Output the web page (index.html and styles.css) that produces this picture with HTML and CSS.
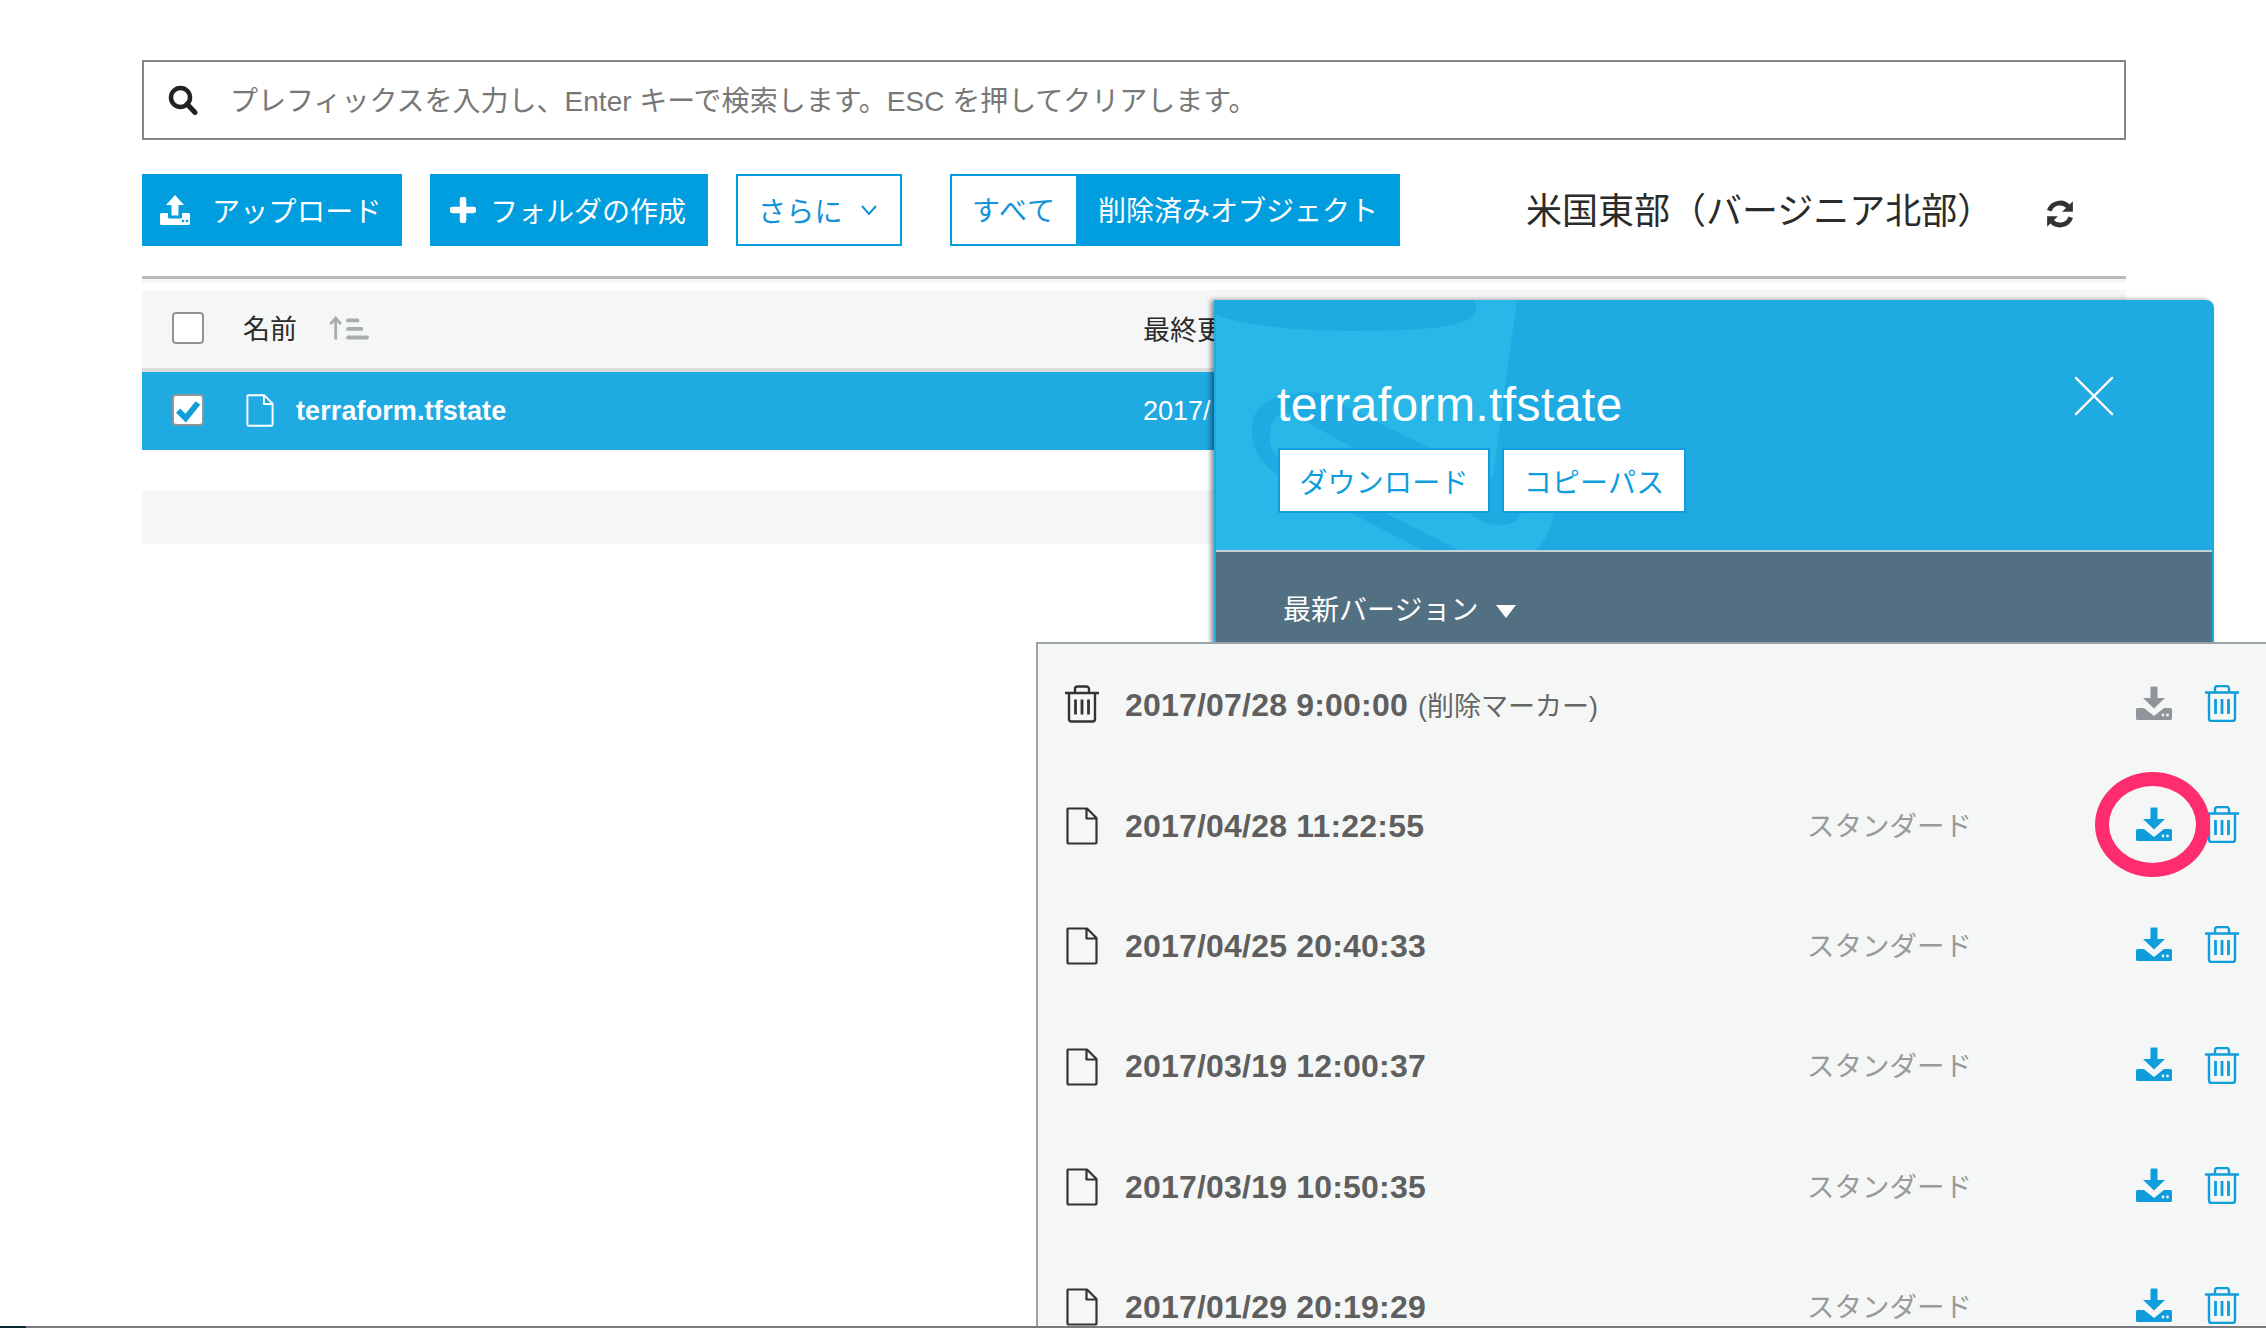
FILE: index.html
```html
<!DOCTYPE html>
<html lang="ja">
<head>
  <meta charset="UTF-8" />
  <title>terraform.tfstate</title>
  <link rel="stylesheet" href="styles.css">
</head>
<body>

<svg class="sprites" width="0" height="0">
  <symbol id="i-file" viewBox="0 0 32 38">
    <path d="M2 1.500H21L30.500 11V35a1.500 1.500 0 0 1-1.500 1.500H3A1.500 1.500 0 0 1 1.500 35V2zM20.500 2V11.500H30" fill="none" stroke="currentColor" stroke-width="2.200" stroke-linejoin="round"/>
  </symbol>
  <symbol id="i-trash" viewBox="0 0 34 37">
    <path d="M0 7.500H34M10 7V3.500A2.500 2.500 0 0 1 12.500 1H21.500A2.500 2.500 0 0 1 24 3.500V7M4 7.500V33.500A2.500 2.500 0 0 0 6.500 36H27.500A2.500 2.500 0 0 0 30 33.500V7.500" fill="none" stroke="currentColor" stroke-width="2.400"/>
    <path d="M10.500 14V29M17 14V29M23.500 14V29" fill="none" stroke="currentColor" stroke-width="2.800"/>
  </symbol>
  <symbol id="i-download" viewBox="0 0 36 34">
    <path d="M14.500 1.500a1 1 0 0 1 1-1H20.500a1 1 0 0 1 1 1V12H29L18 22.500 7 12H14.500Z" fill="currentColor"/>
    <path d="M1.500 22H8L18 30 28 22H34.500a1.500 1.500 0 0 1 1.500 1.500V32.500a1.500 1.500 0 0 1-1.500 1.500H1.500A1.500 1.500 0 0 1 0 32.500V23.500A1.500 1.500 0 0 1 1.500 22Z" fill="currentColor"/>
    <circle cx="27" cy="29" r="1.400" fill="#f5f7f7"/><circle cx="31.500" cy="29" r="1.400" fill="#f5f7f7"/>
  </symbol>
</svg>

<main class="page">
  <div class="search">
    <svg class="search-icon" viewBox="0 0 30 30"><circle cx="12.500" cy="12.500" r="9.500" fill="none" stroke="currentColor" stroke-width="4.500"/><path d="M19 19L27 27.500" stroke="currentColor" stroke-width="5" stroke-linecap="round"/></svg>
    <span>プレフィックスを入力し、Enter キーで検索します。ESC を押してクリアします。</span>
  </div>

  <div class="toolbar">
    <button class="btn btn-solid btn-upload">
      <svg class="icon-upload" viewBox="0 0 30 30"><path d="M15 0L24 10H18.500V20.500H11.500V10H6Z" fill="#fff"/><path d="M1.500 18H8V22a1.500 1.500 0 0 0 1.500 1.500H20.500A1.500 1.500 0 0 0 22 22V18H28.500A1.500 1.500 0 0 1 30 19.500V28.500A1.500 1.500 0 0 1 28.500 30H1.500A1.500 1.500 0 0 1 0 28.500V19.500A1.500 1.500 0 0 1 1.500 18Z" fill="#fff"/><circle cx="23" cy="26" r="1.300" fill="#009ddf"/><circle cx="27" cy="26" r="1.300" fill="#009ddf"/></svg>
      アップロード
    </button>
    <button class="btn btn-solid btn-folder">
      <svg class="icon-plus" viewBox="0 0 24 24"><path d="M12 2.500V21.500M2.500 12H21.500" stroke="#fff" stroke-width="6" stroke-linecap="round"/></svg>
      フォルダの作成
    </button>
    <button class="btn btn-outline btn-more">
      さらに
      <svg class="icon-chevron" viewBox="0 0 18 12"><path d="M2 2L9 10L16 2" fill="none" stroke="currentColor" stroke-width="2"/></svg>
    </button>
    <div class="segment">
      <span class="segment-off">すべて</span>
      <span class="segment-on">削除済みオブジェクト</span>
    </div>
    <span class="region">米国東部（バージニア北部）</span>
    <svg class="icon-refresh" viewBox="0 0 28 28">
      <path d="M4 11A10.500 10.500 0 0 1 22 7.500" fill="none" stroke="currentColor" stroke-width="4.500"/>
      <path d="M24 17A10.500 10.500 0 0 1 6 20.500" fill="none" stroke="currentColor" stroke-width="4.500"/>
      <path d="M26 2V12H16ZM2 26V16H12Z" fill="currentColor"/>
    </svg>
  </div>

  <div class="table">
    <div class="table-rule"></div>
    <div class="table-head">
      <span class="check"></span>
      <span class="col-name">名前</span>
      <svg class="icon-sort" viewBox="0 0 42 26"><path d="M7 25V3M1.500 9L7 2.500 12.500 9" fill="none" stroke="#a9adaf" stroke-width="3"/><path d="M20 5H30M20 14H34M20 23H40" stroke="#a9adaf" stroke-width="4" stroke-linecap="round"/></svg>
      <span class="col-date">最終更</span>
    </div>
    <div class="table-row">
      <span class="check check-on">
        <svg viewBox="0 0 24 24"><path d="M3.500 12.500L10 19 20.500 6" fill="none" stroke="#0f9ddc" stroke-width="5"/></svg>
      </span>
      <svg class="row-file"><use href="#i-file"/></svg>
      <span class="row-name">terraform.tfstate</span>
      <span class="col-date">2017/</span>
    </div>
    <div class="table-foot"></div>
  </div>
</main>

<aside class="panel">
  <div class="panel-head">
    <svg class="panel-art" viewBox="0 0 484 250">
      <path d="M0 0H301L272 213H337C336 228 330 240 320 250H0Z" fill="#29b7e8"/>
      <path d="M0 15C50 32 130 32 190 30C260 26 262 15 259 3V0H0Z" fill="#1faae2"/>
      <path d="M61 97C40 103 33 120 37 140C40 158 52 170 70 180L207 250H243L72 165C58 157 52 145 54 133C55 118 62 112 75 113L253 213C265 222 275 226 285 225C296 225 304 220 305 213L300 190L100 92C85 92 72 94 61 97Z" fill="#1faae2"/>
    </svg>
    <h1 class="panel-title">terraform.tfstate</h1>
    <svg class="panel-close" viewBox="0 0 42 42"><path d="M2 2L40 40M40 2L2 40" stroke="#fff" stroke-width="2.400" stroke-linecap="round"/></svg>
    <div class="panel-actions">
      <button class="panel-btn panel-btn-dl">ダウンロード</button>
      <button class="panel-btn panel-btn-copy">コピーパス</button>
    </div>
  </div>
  <div class="panel-version">
    <span>最新バージョン</span>
    <span class="caret"></span>
  </div>
</aside>

<section class="versions">
  <div class="version">
    <svg class="version-icon version-trash"><use href="#i-trash"/></svg>
    <span class="version-date">2017/07/28 9:00:00</span>
    <span class="version-note">(削除マーカー)</span>
    <svg class="dl dl-off"><use href="#i-download"/></svg>
    <svg class="rm"><use href="#i-trash"/></svg>
  </div>
  <div class="version">
    <svg class="version-icon"><use href="#i-file"/></svg>
    <span class="version-date">2017/04/28 11:22:55</span>
    <span class="version-class">スタンダード</span>
    <svg class="dl"><use href="#i-download"/></svg>
    <svg class="rm"><use href="#i-trash"/></svg>
    <span class="marker"></span>
  </div>
  <div class="version">
    <svg class="version-icon"><use href="#i-file"/></svg>
    <span class="version-date">2017/04/25 20:40:33</span>
    <span class="version-class">スタンダード</span>
    <svg class="dl"><use href="#i-download"/></svg>
    <svg class="rm"><use href="#i-trash"/></svg>
  </div>
  <div class="version">
    <svg class="version-icon"><use href="#i-file"/></svg>
    <span class="version-date">2017/03/19 12:00:37</span>
    <span class="version-class">スタンダード</span>
    <svg class="dl"><use href="#i-download"/></svg>
    <svg class="rm"><use href="#i-trash"/></svg>
  </div>
  <div class="version">
    <svg class="version-icon"><use href="#i-file"/></svg>
    <span class="version-date">2017/03/19 10:50:35</span>
    <span class="version-class">スタンダード</span>
    <svg class="dl"><use href="#i-download"/></svg>
    <svg class="rm"><use href="#i-trash"/></svg>
  </div>
  <div class="version">
    <svg class="version-icon"><use href="#i-file"/></svg>
    <span class="version-date">2017/01/29 20:19:29</span>
    <span class="version-class">スタンダード</span>
    <svg class="dl"><use href="#i-download"/></svg>
    <svg class="rm"><use href="#i-trash"/></svg>
  </div>
</section>

<div class="window-edge"></div>

</body>
</html>
```

FILE: styles.css
```css
:root {
  --blue: #009ddf;
  --row-blue: #1faae2;
  --light-bg: #f5f7f7;
  --text: #2b2b2b;
}

html, body {
  margin: 0;
  height: 1328px;
  overflow: hidden;
}

body {
  position: relative;
  background: #fff;
  color: var(--text);
  font-family: "Liberation Sans", "Noto Sans CJK JP", sans-serif;
}

button {
  font-family: inherit;
  cursor: pointer;
}

.sprites {
  position: absolute;
}

.page {
  width: 1984px;
  margin-left: 142px;
  padding-top: 60px;
}

.search {
  display: flex;
  align-items: center;
  box-sizing: border-box;
  height: 80px;
  padding-bottom: 2px;
  padding-left: 24px;
  border: 2px solid #848484;
  color: #777;
  font-size: 28px;
}

.search-icon {
  width: 30px;
  height: 30px;
  margin: 2px 32px 0 0;
  color: #222;
}

.toolbar {
  display: flex;
  align-items: center;
  height: 72px;
  margin-top: 34px;
}

.btn {
  display: flex;
  align-items: center;
  box-sizing: border-box;
  height: 72px;
  padding: 0;
  border: 2px solid var(--blue);
  font-size: 28px;
  white-space: nowrap;
}

.btn-solid {
  background: var(--blue);
  color: #fff;
}

.btn-outline {
  background: #fff;
  color: #1392d6;
}

.btn-upload {
  width: 260px;
  padding-left: 16px;
  gap: 22px;
  letter-spacing: 0.3px;
}

.btn-folder {
  width: 278px;
  margin-left: 28px;
  padding-left: 18px;
  gap: 14px;
}

.btn-more {
  width: 166px;
  margin-left: 28px;
  padding-left: 20px;
  letter-spacing: 0.3px;
}

.icon-upload {
  width: 30px;
  height: 30px;
}

.icon-plus {
  width: 26px;
  height: 26px;
}

.icon-chevron {
  width: 18px;
  height: 12px;
  margin-left: 17px;
}

.segment {
  display: flex;
  box-sizing: border-box;
  width: 450px;
  height: 72px;
  margin-left: 48px;
  border: 2px solid var(--blue);
  font-size: 28px;
  line-height: 72px;
  white-space: nowrap;
}

.segment-off {
  box-sizing: border-box;
  width: 124px;
  padding-left: 20px;
  background: #fff;
  color: #1392d6;
  letter-spacing: 1px;
}

.segment-on {
  flex: 1;
  padding-left: 22px;
  background: var(--blue);
  color: #fff;
}

.region {
  margin: -4px 0 0 126px;
  font-size: 36px;
  white-space: nowrap;
}

.icon-refresh {
  width: 30px;
  height: 30px;
  margin: 8px 0 0 52px;
  color: #333;
}

.table {
  margin-top: 30px;
  border-top: 3px solid #bbb;
}

.table-rule {
  height: 4px;
  background: var(--light-bg);
}

.table-head {
  display: flex;
  align-items: center;
  box-sizing: border-box;
  height: 82px;
  margin-top: 7px;
  padding: 0 0 2px 30px;
  background: var(--light-bg);
  border-bottom: 4px solid #ddd;
  font-size: 27px;
}

.table-row {
  display: flex;
  align-items: center;
  height: 78px;
  padding-left: 30px;
  background: var(--row-blue);
  color: #fff;
  font-size: 27px;
}

.table-foot {
  height: 54px;
  margin-top: 40px;
  background: var(--light-bg);
}

.check {
  flex: none;
  box-sizing: border-box;
  width: 32px;
  height: 32px;
  background: #fff;
  border: 2px solid #8f9599;
  border-radius: 4px;
}

.check-on {
  margin-top: -2px;
}

.check-on svg {
  display: block;
  width: 100%;
  height: 100%;
}

.col-name {
  margin: -2px 0 0 39px;
  font-size: 27px;
}

.icon-sort {
  width: 40px;
  height: 26px;
  margin-left: 32px;
}

.col-date {
  position: absolute;
  left: 1143px;
  white-space: nowrap;
}

.row-file {
  width: 28px;
  height: 33px;
  margin: -2px 0 0 42px;
}

.row-name {
  margin-left: 22px;
  font-weight: bold;
  letter-spacing: 0.1px;
}

/* object detail panel lies over the table */
.panel {
  position: absolute;
  left: 1214px;
  top: 300px;
  box-sizing: border-box;
  width: 1000px;
  height: 344px;
  padding: 0 2px;
  background: var(--row-blue);
  border-top-right-radius: 8px;
  box-shadow: -3px 0 5px rgba(0, 0, 0, 0.45);
}

.panel-head {
  position: relative;
  box-sizing: border-box;
  height: 250px;
  padding: 77px 0 0 61px;
  overflow: hidden;
}

.panel-art {
  position: absolute;
  left: 0;
  top: 0;
  width: 484px;
  height: 250px;
}

.panel-title {
  position: relative;
  margin: 0;
  color: #fff;
  font-size: 48px;
  font-weight: normal;
  line-height: 56px;
  letter-spacing: 0.4px;
}

.panel-close {
  position: absolute;
  right: 98px;
  top: 76px;
  width: 40px;
  height: 40px;
}

.panel-actions {
  position: relative;
  display: flex;
  gap: 12px;
  margin: 15px 0 0 1px;
}

.panel-btn {
  box-sizing: border-box;
  height: 65px;
  padding: 0;
  background: #fff;
  border: 2px solid #0f9ddc;
  color: #0f9ddc;
  font-size: 28px;
  letter-spacing: 0.2px;
}

.panel-btn-dl {
  width: 212px;
}

.panel-btn-copy {
  width: 184px;
}

.panel-version {
  display: flex;
  align-items: center;
  box-sizing: border-box;
  height: 92px;
  padding: 22px 0 0 67px;
  background: #527082;
  border-top: 2px solid #c6d0d4;
  color: #fff;
  font-size: 28px;
}

.caret {
  width: 0;
  height: 0;
  margin: 6px 0 0 18px;
  border-left: 10px solid transparent;
  border-right: 10px solid transparent;
  border-top: 13px solid #fff;
}

/* version list dropdown */
.versions {
  position: absolute;
  left: 1036px;
  top: 642px;
  right: 0;
  height: 684px;
  overflow: hidden;
  background: var(--light-bg);
  border-top: 2px solid #9aa2a5;
  border-left: 2px solid #9aa2a5;
}

.version {
  position: relative;
  display: flex;
  align-items: center;
  height: 120.300px;
  padding-left: 27px;
}

.version:first-child {
  height: 122px;
}

.version-icon {
  flex: none;
  width: 34px;
  height: 38px;
  color: #333;
}

.version-trash {
  margin-top: -2px;
}

.version-date {
  margin-left: 26px;
  color: #5f5f5f;
  font-size: 32px;
  font-weight: bold;
  letter-spacing: 0.2px;
  white-space: nowrap;
}

.version-note {
  margin: -2px 0 0 10px;
  color: #666;
  font-size: 27px;
  white-space: nowrap;
}

.version-class {
  position: absolute;
  left: 769px;
  margin-top: -5px;
  color: #9a9a9a;
  font-size: 27.500px;
}

.dl {
  position: absolute;
  left: 1098px;
  margin-top: -5px;
  width: 36px;
  height: 34px;
  color: #0f9ddc;
}

.dl-off {
  color: #8f9599;
}

.rm {
  position: absolute;
  left: 1167px;
  margin-top: -3px;
  width: 34px;
  height: 37px;
  color: #0f9ddc;
}

/* hand-drawn red circle */
.marker {
  position: absolute;
  left: 1057px;
  top: 6px;
  box-sizing: border-box;
  width: 115px;
  height: 105px;
  border: 14px solid #ff2d6e;
  border-radius: 50%;
}

.window-edge {
  position: absolute;
  left: 0;
  right: 0;
  bottom: 0;
  height: 2px;
  background: linear-gradient(to right, #0a2b33 26px, #7b7b7b 26px);
}
```
